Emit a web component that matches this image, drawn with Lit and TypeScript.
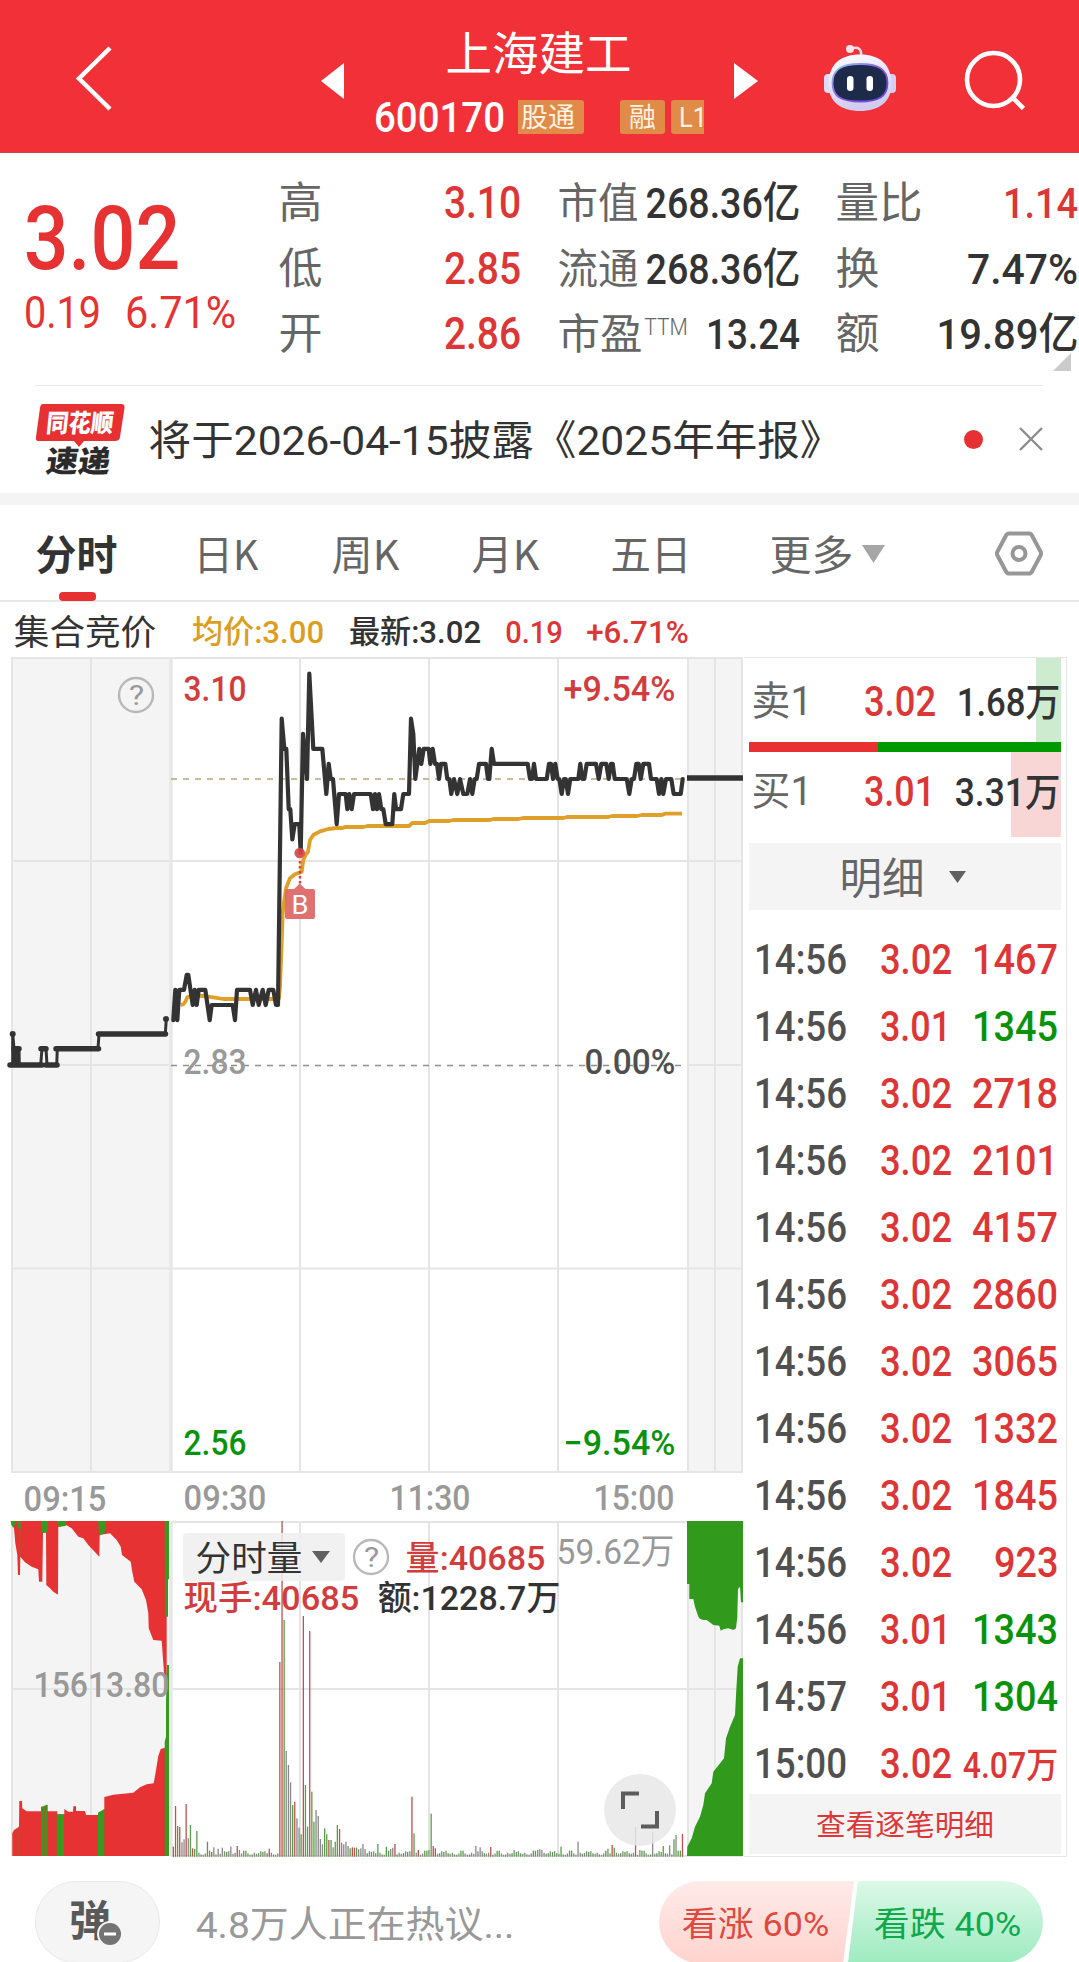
import { LitElement, html, svg, css } from "lit";
import { customElement, property } from "lit/decorators.js";

/* One line of text set to an exact ink width. The box height is the cap height. */
@customElement("fit-text")
class FitText extends LitElement {
  @property() text = "";
  @property({ type: Number }) w = 100;
  @property({ type: Number }) size = 40;

  static styles = css`
    :host { display: block; flex: none; }
    svg { display: block; overflow: visible; }
    text { fill: currentColor; white-space: pre; }
  `;

  render() {
    const h = Math.round(this.size * 0.711);
    const b = this.size * (/^[\d.%+:]+$/.test(this.text) ? 0.025 : 0.035);
    return html`<svg width=${this.w} height=${h}>
      <text x=${-b} y=${h} font-size=${this.size} textLength=${this.w + 2 * b} lengthAdjust="spacingAndGlyphs">${this.text}</text>
    </svg>`;
  }
}

const t = (text: string, w: number, size: number, cls = "") =>
  html`<fit-text class=${cls} .text=${text} .w=${w} .size=${size}></fit-text>`;

const label = (text: string, x: number, y: number, w: number, size: number, cls: string) =>
  svg`<text class=${cls} x=${x - size * 0.04} y=${y} font-size=${size} textLength=${w + size * 0.08} lengthAdjust="spacingAndGlyphs">${text}</text>`;

type Pt = [number, number];

/* Price series: horizontal position and ticks above the previous close. */
const BASE = 1065.3;
const TICK = 15.07;
const morning: Pt[] = [
  [40,3],[46,5],[52,3],[58,5],[72,5],[80,6],[85,6],[98,4],[104,5],[110,4],[116,5],[136,5],[149,3],[155,4],[218,4],[225,3],[231,5],
  [270,5],[278,4],[288,5],[296,4],[308,5],[317,4],[326,5],[340,5],[348,4],[354,4],[365,23],[373,21],[379,21],[386,17],[391,17],
  [397,15],[404,16],[418,16],[422,14.1],[429,22],[441,19],[448,26],[460,21],[487,21],[499,18],[506,20],[512,19],[519,19],[530,16],
  [537,18],[557,18],[562,17],[568,18],[575,17],[582,18],[632,18],[639,17],[645,18],[651,17],[657,18],[664,17],[670,17],[677,16],
  [697,16],[703,18],[708,17],[723,17],[730,18],[747,18],[753,23],[760,22],[766,19],[778,21],[784,20],[791,21],[806,21],[811,20],
  [818,21],[825,20],[831,20],[837,19],[843,20],[856,20],[862,19],[868,19],
];
const afternoon: Pt[] = [
  [214,18],[222,19],[232,18],[240,19],[250,18],[262,18],[270,19],[277,18],[284,19],[290,19],[297,20],[318,20],[324,19],[328,19],
  [335,21],[342,20],[443,20],[450,19],[456,19],[462,20],[468,19],[500,19],[507,20],[513,20],[519,19],[526,20],[533,19],[538,19],
  [545,18],[552,19],[557,19],[564,18],[571,19],[595,19],[601,20],[607,19],[613,19],[620,20],[648,20],[656,19],[664,20],[679,20],
  [686,19],[693,20],[698,20],[704,19],[740,19],[748,18],[755,19],[762,19],[769,20],[776,20],[782,19],[790,20],[807,20],[813,19],
  [830,19],[837,18],[844,19],[850,18],[858,19],[874,19],[881,18],[902,18],[908,19],
];
const f = (n: number) => n.toFixed(1);
const priceLine = [
  ...morning.map(([x, n]) => `${f(160 + x / 3)},${f(BASE - TICK * n)}`),
  ...afternoon.map(([x, n]) => `${f(380 + x / 3)},${f(BASE - TICK * n)}`),
].join(" ");

const place = (pts: Pt[], ox: number, oy: number) => pts.map(([x, y]) => `${f(ox + x / 3)},${f(oy + y / 3)}`).join(" ");
const avgLine = place([
  [62,1095],[70,1093],[76,1085],[82,1072],[95,1067],[130,1068],[160,1072],[190,1077],[340,1077],[357,1075],[360,1040],[364,940],[368,820],
  [373,780],[378,745],[390,715],[405,703],[425,695],[430,660],[437,645],[444,635],[450,600],[460,585],[480,574],[505,567],[530,564],
  [548,564],[555,561],[610,561],[622,558],[747,558],[757,549],[795,549],[808,543],[868,543],[880,540],[990,540],[1000,537],[1075,537],
  [1090,534],[1210,534],[1222,531],[1345,531],[1357,528],[1430,528],[1445,525],[1505,525],[1515,521],[1566,521],
], 160, 640);
const auctionLine = place([
  [30,1275],[38,1275],[38,1182],[42,1226],[42,1275],[50,1275],[50,1226],[57,1226],[58,1275],[122,1275],[126,1226],[138,1226],[141,1275],
  [170,1275],[172,1226],[294,1226],[297,1182],[496,1182],[499,1137],
], 0, 640);

const V = 1400;
const redTop = place([[35,363],[42,385],[46,430],[52,465],[54,525],[60,525],[61,470],[75,487],[95,500],[115,508],[117,545],[127,545],[129,398],
  [138,398],[139,555],[150,565],[160,575],[174,584],[175,380],[198,375],[215,385],[235,410],[250,415],[265,435],[290,462],[298,470],[299,405],
  [330,400],[350,420],[362,440],[366,465],[392,485],[397,515],[403,545],[425,568],[438,600],[445,640],[446,685],[460,720],[485,722],[490,790],
  [495,858],[500,858],[500,363]], 0, V);
const redBottom = place([[37,1368],[37,1300],[42,1290],[57,1280],[58,1203],[66,1203],[67,1225],[80,1234],[172,1234],[172,1243],[193,1243],
  [193,1227],[205,1235],[219,1235],[220,1219],[228,1219],[228,1233],[255,1233],[258,1245],[295,1245],[313,1228],[313,1191],[340,1184],
  [400,1178],[420,1162],[440,1153],[461,1150],[468,1110],[475,1068],[482,1047],[495,1043],[500,1368]], 0, V);
const greens = [
  [[32,363],[46,363],[46,372],[40,384],[34,374]],
  [[54,363],[62,363],[62,386],[54,386]],
  [[123,363],[143,363],[143,396],[125,400]],
  [[172,363],[198,363],[198,377],[176,381]],
  [[295,363],[318,363],[317,396],[297,408]],
  [[494,363],[507,363],[507,538],[504,538],[504,650],[495,650]],
  [[123,1368],[123,1220],[136,1217],[137,1214],[143,1214],[143,1368]],
  [[170,1368],[170,1243],[192,1243],[192,1368]],
  [[294,1368],[294,1238],[313,1227],[313,1368]],
  [[494,1368],[494,1025],[498,1010],[498,905],[501,795],[507,795],[507,1368]],
].map((p) => place(p as Pt[], 0, V));
const seams = [[134,1217,1368],[40,1300,1368],[57,1280,1368],[60,363,470]];
const rightTop = place([[951,363],[951,552],[958,552],[958,597],[970,597],[975,620],[985,650],[990,656],[1000,660],[1010,660],[1030,675],
  [1048,677],[1052,692],[1060,688],[1075,685],[1090,690],[1098,685],[1102,650],[1104,567],[1110,560],[1113,607],[1119,607],[1119,363]], 370, V);
const rightBottom = place([[951,1368],[952,1340],[965,1315],[975,1280],[990,1250],[1000,1215],[1005,1180],[1025,1150],[1030,1115],[1062,1075],
  [1068,1015],[1080,980],[1095,945],[1099,870],[1103,800],[1110,775],[1119,775],[1119,1368]], 370, V);

/* Volume bars that stand out: horizontal position, top, tone. */
const peaks: [number, number, string][] = [
  [520,1340,"r"],[527,1218,"r"],[533,1278,"g"],[540,1281,"r"],[547,1327,"k"],[553,1318,"k"],[559,1212,"r"],[565,1315,"k"],[572,1275,"g"],
  [578,1345,"r"],[584,1347,"g"],[591,1293,"g"],[622,1325,"g"],[634,1356,"r"],[641,1342,"k"],[654,1346,"k"],[667,1343,"k"],[692,1340,"k"],
  [711,1338,"r"],[718,1350,"k"],[807,1346,"r"],[839,786,"r"],[845,363,"r"],[852,660,"g"],[858,1053,"k"],[864,1095,"k"],[871,1147,"k"],
  [877,1215,"g"],[883,1205,"r"],[890,1255,"k"],[896,1283,"k"],[902,1303,"g"],[909,648,"r"],[915,1155,"g"],[922,1280,"g"],[928,693,"r"],
  [934,1175,"g"],[941,1265,"g"],[947,1230,"k"],[953,1248,"k"],[960,1317,"k"],[966,1333,"k"],[972,1285,"g"],[979,1303,"g"],[985,1320,"r"],
  [991,1320,"g"],[998,1342,"k"],[1004,1325,"g"],[1011,1275,"g"],[1017,1287,"r"],[1023,1328,"k"],[1030,1333,"k"],[1036,1325,"k"],
  [1042,1338,"k"],[1049,1345,"g"],[1055,1342,"r"],[1061,1343,"r"],[1068,1343,"g"],[1074,1348,"k"],[1081,1345,"k"],[1087,1332,"k"],
  [1093,1347,"k"],[1131,1332,"g"],[1156,1340,"g"],[1170,1347,"k"],[1176,1343,"k"],[1182,1332,"r"],[1233,1190,"r"],[1239,1300,"g"],
  [1252,1350,"r"],[1258,1332,"r"],[1284,1350,"k"],[1290,1241,"g"],[1297,1338,"r"],[1303,1345,"r"],[1341,1352,"k"],[1430,1338,"k"],
  [1443,1342,"k"],[1469,1341,"r"],[1475,1348,"r"],[1545,1350,"k"],[1615,1350,"k"],[1621,1348,"k"],[1628,1350,"k"],[1685,1340,"g"],
  [1736,1325,"k"],[1824,1346,"g"],[1837,1335,"r"],[1843,1343,"g"],[1907,1281,"r"],[1920,1350,"k"],[1958,1296,"k"],[1990,1338,"g"],
  [2009,1336,"k"],[2022,1318,"g"],[2028,1305,"k"],[2048,1302,"r"],
];
const bars = Array.from({ length: 240 }, (_, i) => {
  const x = 520 + i * 6.39;
  const hit = peaks.find((p) => Math.abs(p[0] - x) < 3.2);
  if (hit) return { x, y: hit[1], c: hit[2] };
  const n = (i * 7919 + i * i * 31) % 17;
  return { x, y: 1352 + n * 0.75, c: n % 5 === 0 ? "g" : n % 4 === 1 ? "r" : "k" };
});

const trades: [string, string, string, number][] = [
  ["14:56","3.02","1467",1],["14:56","3.01","1345",0],["14:56","3.02","2718",1],["14:56","3.02","2101",1],["14:56","3.02","4157",1],
  ["14:56","3.02","2860",1],["14:56","3.02","3065",1],["14:56","3.02","1332",1],["14:56","3.02","1845",1],["14:56","3.02","923",1],
  ["14:56","3.01","1343",0],["14:57","3.01","1304",0],["15:00","3.02","4.07万",1],
];

const quotes: [string, number, string, number, string, number, string, number, string, number, string, number][] = [
  ["高",41,"3.10",75,"市值",78,"268.36亿",152,"量比",84,"1.14",73],
  ["低",41,"2.85",75,"流通",78,"268.36亿",152,"换",41,"7.47%",109],
  ["开",41,"2.86",75,"市盈",82,"13.24",92,"额",41,"19.89亿",139],
];

@customElement("app-root")
class AppRoot extends LitElement {
  static styles = css`
    :host {
      display: block; width: 1079px; height: 1962px; overflow: hidden; background: #fff; color: #333;
      font-family: Roboto, "Noto Sans CJK SC", sans-serif;
    }
    * { box-sizing: border-box; }
    svg { display: block; flex: none; overflow: visible; }
    .red { color: #dc3636; } .green { color: #0a930a; } .grey { color: #666; } .dim { color: #999; }
    .m { font-weight: 500; } .b { font-weight: 700; } .l { font-weight: 300; }
    .cjk { font-family: "Noto Sans CJK SC", sans-serif; }

    header {
      height: 153px; background: #f13038; color: #fff; border-bottom: 1px solid #c2464c;
      display: grid; grid-template-columns: 321px 23px 390px 24px 66px 72px 1fr;
    }
    header .back { padding: 44px 0 0 74px; }
    header .arrow { padding-top: 63px; }
    .name { display: flex; flex-direction: column; padding-top: 37px; overflow: hidden; }
    .name .title { padding-left: 103px; height: 65px; }
    .code { display: flex; padding-left: 31px; width: 360px; overflow: hidden; height: 40px; margin-top: -4px; padding-top: 4px; }
    .tag { height: 34px; margin-top: -2px; background: #e18b48; border-radius: 3px; padding: 8px 0 0 10px; flex: none; color: #fff3e4; }
    .tag.first { width: 66px; margin-left: 14px; padding-left: 4px; border-radius: 0 3px 3px 0; }
    .tag.mid { width: 45px; margin-left: 36px; }
    .tag.end { width: 45px; margin-left: 6px; padding-left: 9px; }
    .robot { padding-top: 44px; }
    .find { padding: 49px 0 0 67px; }

    .quote { height: 232px; display: grid; grid-template-columns: 279px 1fr; }
    .last { padding: 53px 0 0 26px; display: flex; flex-direction: column; gap: 28px; color: #e63232; }
    .change { display: flex; gap: 26px; margin-left: -1px; }
    .stats { padding-top: 33px; display: flex; flex-direction: column; gap: 33.5px; }
    .stat { display: grid; grid-template-columns: 241px 38px 240px 38px 240px; height: 32px; align-items: end; padding-left: 1px; }
    .pair { display: flex; justify-content: space-between; align-items: end; }
    .pair:first-child { padding-right: 1px; }
    .pair .ttm { margin-left: -17px; padding-bottom: 14px; }
    .fold { margin: -30px 8px 0 auto; width: 18px; }
    .rule { height: 1px; margin: 0 36px 0 35px; background: #e9e9e9; }
    .news { height: 107px; display: flex; align-items: center; padding-left: 34px; }
    .news .headline { margin: 1px 0 0 24px; }
    .news .dot { width: 19px; height: 19px; border-radius: 50%; background: #e63032; margin-left: 123px; }
    .news .close { margin: -1px 0 0 36px; }
    .band { height: 12px; background: #f4f4f4; }

    nav { height: 97px; border-bottom: 2px solid #e8e8e8; display: grid; grid-template-columns: 195px 138px 140px 139px 159px 91px 133px 48px; align-items: start; padding-top: 36px; }
    nav .first { padding-left: 37px; }
    nav .bar { width: 37px; height: 9px; border-radius: 4px; background: #e63032; margin: 22px 0 0 22px; }
    nav .tri { padding-top: 4px; } nav .hex { margin-top: -10px; }
    .info { height: 55px; display: flex; align-items: start; padding: 18px 0 0 15px; }
    .avg { color: #dc9e20; margin-left: 38px; } .now { margin-left: 27px; } .diff { margin-left: 26px; } .pct { margin-left: 25px; }

    main { height: 1201px; display: grid; grid-template-columns: 744px 323px; }
    .chart text.r { fill: #d23c3c; } .chart text.k { fill: #333; } .chart text.g { fill: #0a930a; } .chart text.d { fill: #999; } .chart text.m5 { fill: #4f4f4f; }
    .chart text { font-weight: 500; } .chart text.n { font-weight: 400; }

    aside { border: 1px solid #e6e6e6; border-width: 1px 1px 1px 0; padding: 0 5px; height: 1200px; display: flex; flex-direction: column; }
    .book { height: 84px; padding: 29px 0 0 4px; display: grid; grid-template-columns: 112px 70px 1fr; align-items: start; }
    .sell { background: linear-gradient(#cdebce, #cdebce) right / 25px 100% no-repeat; }
    .buy { height: 85px; padding-top: 25px; background: linear-gradient(#f9d6d6, #f9d6d6) right / 50px 100% no-repeat; }
    .book fit-text:nth-child(2) { margin-top: -1px; }
    .book fit-text:last-child { justify-self: end; margin: 1px 2px 0 0; }
    .ratio { height: 10px; background: linear-gradient(90deg, #e63032 129px, #090 129px); flex: none; }
    .pick { height: 67px; margin-top: 6px; background: #f4f4f4; display: flex; align-items: center; justify-content: center; gap: 26px; padding: 4px 3px 0 0; flex: none; color: #666; }
    .pick svg { margin-top: -3px; }
    .trades { display: flex; flex-direction: column; gap: 37.03px; padding: 34px 4px 0 7px; height: 884px; }
    .trade { height: 30px; display: grid; grid-template-columns: 125px 71px 1fr; align-items: end; color: #505050; }
    .trade fit-text:first-child { margin-left: -1px; }
    .trade fit-text:last-child { justify-self: end; }
    .more { height: 60px; background: #f4f4f4; display: flex; align-items: center; justify-content: center; flex: none; margin-bottom: 2px; padding-top: 2px; }

    footer { height: 104px; padding: 23px 36px 0 35px; display: flex; align-items: start; }
    .danmu { width: 125px; height: 82px; border-radius: 41px; border: 1px solid #e9e9e9; background: #f5f5f5; padding: 16px 0 0 34px; flex: none; }
    .talk { margin: 31px 0 0 37px; width: 462px; flex: none; }
    .votes { display: grid; grid-template-columns: 199px 185px; height: 82px; }
    .vote { padding: 31px 0 0 24px; }
    .up { background: linear-gradient(#ffebe9, #ffd3ce); border-radius: 41px 0 0 41px; clip-path: polygon(0 0, 195px 0, 184px 100%, 0 100%); color: #de4940; }
    .down { background: linear-gradient(#dcf9e8, #9debbf); border-radius: 0 41px 41px 0; clip-path: polygon(10px 0, 100% 0, 100% 100%, 0 100%); margin-left: -10px; padding-left: 27px; color: #10a84c; }
  `;

  private header() {
    return html`<header>
      <div class="back"><svg width="40" height="68" fill="none" stroke="#fff" stroke-width="4.5"><path d="M36 4L5 34.500L36 65" /></svg></div>
      <div class="arrow"><svg width="23" height="36" fill="#fff"><path d="M0 18L23 0V36Z" /></svg></div>
      <div class="name">
        <div class="title">${t("上海建工", 183, 46, "cjk")}</div>
        <div class="code">
          ${t("600170", 129, 42, "m")}
          <div class="tag first">${t("股通", 52, 27)}</div>
          <div class="tag mid">${t("融", 25, 27)}</div>
          <div class="tag end">${t("L1", 26, 27)}</div>
        </div>
      </div>
      <div class="arrow"><svg width="24" height="36" fill="#fff"><path d="M24 18L0 0V36Z" /></svg></div>
      <div></div>
      <div class="robot">${this.robot()}</div>
      <div class="find"><svg width="64" height="64" fill="none" stroke="#fff" stroke-width="4.600"><circle cx="30.500" cy="30.500" r="26.500" /><path d="M49.500 48.500L60.500 59.500" /></svg></div>
    </header>`;
  }

  private robot() {
    return html`<svg width="72" height="68" viewBox="824 44 72 68">
      <defs>
        <linearGradient id="shell" x1="0" y1="0" x2="0.3" y2="1"><stop offset="0" stop-color="#fff" /><stop offset=".55" stop-color="#e6e2fa" /><stop offset="1" stop-color="#d0cbf0" /></linearGradient>
        <linearGradient id="rim" x1="0" y1="0" x2="1" y2="1"><stop offset="0" stop-color="#8fd0ee" /><stop offset=".5" stop-color="#8b55d8" /><stop offset="1" stop-color="#5a48d8" /></linearGradient>
      </defs>
      <path d="M851 49C858 46 862 49 861 56" fill="none" stroke="#f6dbe8" stroke-width="2.600" />
      <circle cx="850" cy="49" r="4" fill="#fbe3ea" />
      <rect x="824" y="74" width="9" height="19" rx="4" fill="#dfdcf6" /><rect x="887" y="74" width="9" height="19" rx="4" fill="#d3cff2" />
      <path d="M860 54.500C880 54.500 891.500 65 891.500 84C891.500 102 879 111 860 111C841 111 828.500 102 828.500 84C828.500 65 840 54.500 860 54.500Z" fill="url(#shell)" />
      <path d="M860 64C878 64 887.500 69 887.500 83C887.500 97 878 101.500 860 101.500C842 101.500 832.500 97 832.500 83C832.500 69 842 64 860 64Z" fill="#1e2a4a" stroke="url(#rim)" stroke-width="1.800" />
      <rect x="847" y="76" width="6.500" height="15" rx="3.200" fill="#fff" /><rect x="866.500" y="76" width="6.500" height="15" rx="3.200" fill="#fff" />
    </svg>`;
  }

  private quote() {
    return html`<section class="quote">
      <div class="last">
        ${t("3.02", 152, 89, "m")}
        <div class="change">${t("0.19", 75, 44)}${t("6.71%", 109, 44)}</div>
      </div>
      <div class="stats">
        ${quotes.map((q, i) => html`<div class="stat">
          <div class="pair">${t(q[0], q[1], 43, "grey cjk")}${t(q[2], q[3], 44, "red m")}</div><i></i>
          <div class="pair">${t(q[4], q[5], 42, "grey cjk")}${i === 2 ? t("TTM", 42, 23, "grey l ttm") : ""}${t(q[6], q[7], 43, "m")}</div><i></i>
          <div class="pair">${t(q[8], q[9], 43, "grey cjk")}${t(q[10], q[11], 43, i === 0 ? "red m" : "m")}</div>
        </div>`)}
        <div class="fold"><svg width="18" height="18" fill="#cbcbcb"><path d="M18 0V18H0Z" /></svg></div>
      </div>
    </section>`;
  }

  private news() {
    return html`<div class="rule"></div><section class="news">
      <svg width="92" height="76" viewBox="34 401 92 76">
        <path d="M43 403H121Q125 403 124.500 407L120 436Q119.500 440 115 440H84L79 446L74 440H38Q35.500 440 36 436L40 407Q40.500 403 43 403Z" fill="#e63032" />
        <text transform="translate(45.500 431) skewX(-6)" font-family="Noto Sans CJK SC" font-size="25" font-weight="800" fill="#fff" textLength="67" lengthAdjust="spacingAndGlyphs">同花顺</text>
        <text transform="translate(45 471) skewX(-8)" font-family="Noto Sans CJK SC" font-size="30" font-weight="900" fill="#2b2b2b" textLength="64" lengthAdjust="spacingAndGlyphs">速递</text>
      </svg>
      <div class="headline">${t("将于2026-04-15披露《2025年年报》", 691, 41)}</div>
      <div class="dot"></div>
      <svg class="close" width="24" height="24" stroke="#8c8c8c" stroke-width="2.400"><path d="M1 1L23 23M23 1L1 23" /></svg>
    </section><div class="band"></div>`;
  }

  private tabs() {
    return html`<nav>
      <div class="first">${t("分时", 79, 41, "cjk b")}<div class="bar"></div></div>
      ${t("日K", 62, 41, "cjk grey")}${t("周K", 65, 41, "cjk grey")}${t("月K", 65, 41, "cjk grey")}${t("五日", 78, 41, "cjk grey")}${t("更多", 81, 41, "cjk grey")}
      <div class="tri"><svg width="23" height="19" fill="#a6a6a6"><path d="M0 0H23L11.500 18Z" /></svg></div>
      <svg class="hex" width="50" height="46" fill="none" stroke="#979797" stroke-width="4"><path d="M14 2.500H34Q36 2.500 37 4.500L45.500 20.500Q46.500 22.500 45.500 24.500L37 40.500Q36 42.500 34 42.500H14Q12 42.500 11 40.500L2.500 24.500Q1.500 22.500 2.500 20.500L11 4.500Q12 2.500 14 2.500Z" /><circle cx="24" cy="22.500" r="6.500" /></svg>
    </nav>
    <div class="info">
      ${t("集合竞价", 140, 35, "cjk")}${t("均价:3.00", 130, 32, "avg m")}${t("最新:3.02", 130, 32, "now m")}${t("0.19", 56, 32, "diff red m")}${t("+6.71%", 101, 32, "pct red m")}
    </div>`;
  }

  private chart() {
    const tone: Record<string, string> = { r: "#bd5250", g: "#579f48", k: "#888" };
    return svg`<svg class="chart" width="744" height="1201" viewBox="0 657 744 1201">
      <g fill="#f4f4f4"><path d="M11 657.500H171V1472H11ZM688 657.500H743V1472H688ZM11 1521H171V1856H11ZM688 1521H743V1856H688Z" /></g>
      <g stroke="#e5e5e5" stroke-width="2" fill="none">
        <path d="M11 658H743M11 861H743M11 1065H171M688 1065H743M11 1268.500H743M11 1472H743M171 1522H688M11 1689H743M171 1856H743" />
        <path d="M12 658V1472M91 658V1472M300 658V1472M429 658V1472M558 658V1472M688 658V1472M715 658V1472M742 658V1472" />
        <path d="M12 1521V1856M91 1521V1856M300 1521V1856M429 1521V1856M558 1521V1856M688 1521V1856M715 1521V1856M742 1521V1856" />
      </g>
      <path d="M171 658V1472M171 1521V1856" stroke="#e7e7e7" stroke-width="3.500" />
      <g fill="none" stroke-width="1.700" stroke-dasharray="6 6"><path d="M171 779H684" stroke="#bda277" /><path d="M171 1065.500H684" stroke="#8f8f8f" /></g>
      <circle cx="136" cy="695" r="17" fill="none" stroke="#b8b8b8" stroke-width="2.400" />
      ${label("?", 130, 705, 13, 27, "d n")}
      ${label("3.10", 185, 701, 60, 35, "r")}${label("+9.54%", 565, 701, 109, 35, "r")}
      ${label("2.56", 185, 1455, 60, 35, "g")}${label("−9.54%", 565, 1455, 109, 35, "g")}
      ${label("09:15", 25, 1511, 80, 35, "d")}${label("09:30", 185, 1510, 80, 35, "d")}${label("11:30", 391, 1510, 78, 35, "d")}${label("15:00", 595, 1510, 78, 35, "d")}
      <polyline points=${avgLine} fill="none" stroke="#dfa02a" stroke-width="3.800" stroke-linejoin="round" />
      <polyline points=${priceLine} fill="none" stroke="#333" stroke-width="4.200" stroke-linejoin="round" stroke-linecap="round" />
      <polyline points=${auctionLine} fill="none" stroke="#333" stroke-width="3" stroke-linejoin="round" />
      <path d="M10 1065H42M46 1065H57M56 1048.700H98.500M98.500 1034H165.500M41 1048.700H46M14 1048.700H19" stroke="#333" stroke-width="5.500" stroke-linecap="round" />
      <g fill="#333"><circle cx="12.700" cy="1034" r="3" /><circle cx="166" cy="1019" r="3" /></g>
      <path d="M687 778H743" stroke="#333" stroke-width="5.600" />
      ${label("2.83", 185, 1074, 60, 35, "d")}${label("0.00%", 586, 1074, 88, 35, "m5")}
      <circle cx="299.700" cy="853" r="5.300" fill="#d64545" opacity=".9" /><path d="M300 861V884" stroke="#d64545" stroke-width="2.500" stroke-dasharray="2.500 2.500" />
      <path d="M286.500 889H294L299.700 883.500L305.500 889H313Q315 889 315 891V917Q315 919 313 919H287Q285 919 285 917V891Q285 889 286.500 889Z" fill="#dd6868" opacity=".94" />
      <text class="n" x="291.500" y="913.500" font-size="26" textLength="17" lengthAdjust="spacingAndGlyphs" fill="#fff">B</text>

      <polygon points=${redTop} fill="#e63232" /><polygon points=${redBottom} fill="#e63232" />
      ${greens.map((p) => svg`<polygon points=${p} fill="#369a20" />`)}
      ${seams.map(([x, a, b]) => svg`<path d=${`M${x / 3} ${V + a / 3}V${V + b / 3}`} stroke="#a0602a" stroke-width="1" />`)}
      <polygon points=${rightTop} fill="#319a1d" /><polygon points=${rightBottom} fill="#319a1d" />
      ${bars.map((b) => svg`<rect x=${f(b.x / 3 - 0.6)} y=${f(V + b.y / 3)} width="1.300" height=${f((1370 - b.y) / 3)} fill=${tone[b.c]} />`)}
      ${label("15613.80", 35, 1697, 133, 35, "d")}
      <rect x="183" y="1533" width="162" height="48" rx="4" fill="#efefef" opacity=".86" />
      ${label("分时量", 197, 1571, 104, 35, "k n")}<path d="M312 1551H330L321 1563Z" fill="#606060" />
      <circle cx="371" cy="1557" r="17" fill="none" stroke="#b8b8b8" stroke-width="2.400" />${label("?", 365, 1567, 13, 27, "d n")}
      ${label("量:40685", 407, 1570, 137, 34, "r")}${label("59.62万", 558, 1564, 115, 35, "d n")}
      ${label("现手:40685", 185, 1610, 173, 34, "r")}${label("额:1228.7万", 379, 1610, 180, 34, "k")}
      <circle cx="640" cy="1810" r="36" fill="#e8e8e8" opacity=".85" />
      <path d="M623 1809V1793.500H639M641 1826.500H657V1811" fill="none" stroke="#5c5c5c" stroke-width="4" />
    </svg>`;
  }

  private book() {
    return html`<aside>
      <div class="book sell">${t("卖1", 58, 40, "grey")}${t("3.02", 70, 42, "red m")}${t("1.68万", 101, 39, "m")}</div>
      <div class="ratio"></div>
      <div class="book buy">${t("买1", 58, 40, "grey")}${t("3.01", 69, 42, "red m")}${t("3.31万", 103, 39, "m")}</div>
      <div class="pick">${t("明细", 82, 43, "cjk")}<svg width="17" height="12" fill="#606060"><path d="M0 0H17L8.500 12Z" /></svg></div>
      <div class="trades">
        ${trades.map(([time, price, vol, up]) => html`<div class="trade">
          ${t(time, 91, 42, "m")}${t(price, price === "3.02" ? 70 : 69, 42, "red m")}
          ${t(vol, vol.includes("万") ? 93 : vol.length * 21.5 - 2, vol.includes("万") ? 36 : 42, up ? "red m" : "green m")}
        </div>`)}
      </div>
      <div class="more">${t("查看逐笔明细", 176, 29, "cjk red")}</div>
    </aside>`;
  }

  private bottom() {
    return html`<footer>
      <div class="danmu"><svg width="52" height="52">
        <text x="-1" y="38" font-family="Noto Sans CJK SC" font-weight="700" font-size="42" fill="#595959">弹</text>
        <circle cx="40" cy="36" r="13" fill="#f5f5f5" /><circle cx="40" cy="36" r="11" fill="#747474" /><path d="M34 36H46" stroke="#fff" stroke-width="3" />
      </svg></div>
      <div class="talk">${t("4.8万人正在热议...", 316, 37, "dim")}</div>
      <div class="votes">
        <div class="vote up">${t("看涨 60%", 145, 34)}</div>
        <div class="vote down">${t("看跌 40%", 145, 34)}</div>
      </div>
    </footer>`;
  }

  render() {
    return html`${this.header()}${this.quote()}${this.news()}${this.tabs()}<main>${this.chart()}${this.book()}</main>${this.bottom()}`;
  }
}
